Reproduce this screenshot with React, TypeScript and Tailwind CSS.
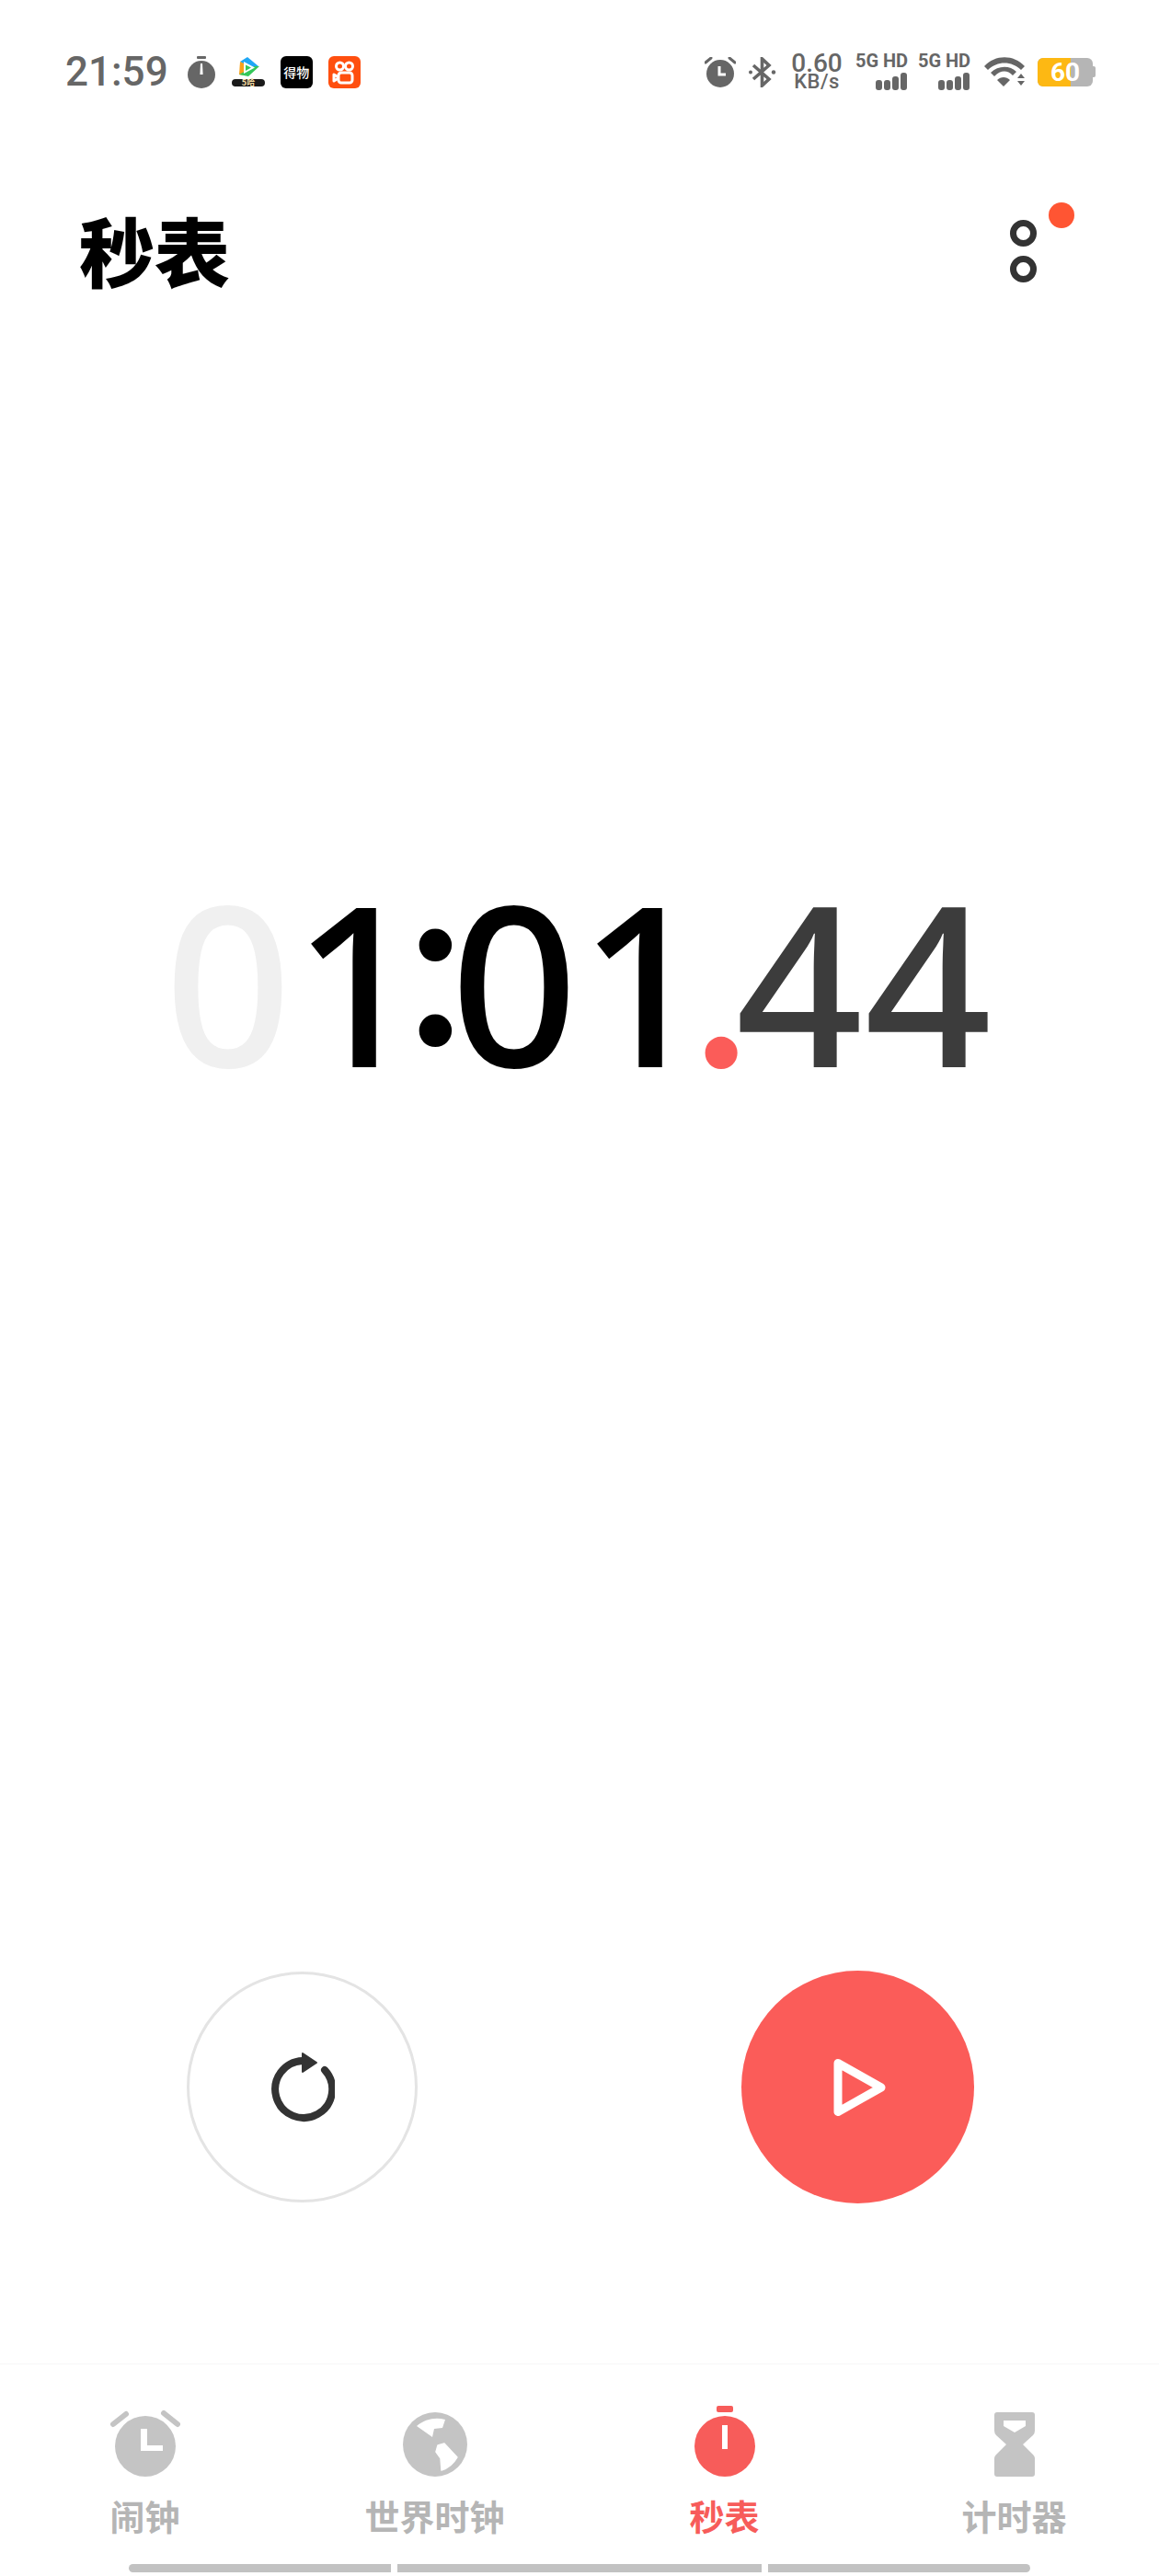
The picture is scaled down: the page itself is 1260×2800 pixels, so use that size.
const CJK = 'font-["Noto_Sans_CJK_SC",sans-serif]';

function StatusBar() {
  return (
    <div className="flex h-[60px] items-center justify-between pl-[71px] pr-[69px] mt-[48px] text-[#666666] font-['Roboto',sans-serif]">
      <div className="flex items-center">
        <span className="text-[44px] font-medium leading-none">21:59</span>
        <svg viewBox="0 0 30 35" className="ml-[21px] h-[35px] w-[30px]">
          <rect x="10" y="0" width="10" height="3" rx="1" fill="#666" />
          <circle cx="15" cy="20" r="15" fill="#666" />
          <path d="M14 8h2l.6 12h-3.2z" fill="#fff" />
        </svg>
        <svg viewBox="0 0 36 34" className="ml-[18px] h-[34px] w-[36px]">
          <path d="M9 6 L17 1 L29 11 L24 14 L12 8z" fill="#1fa7f5" />
          <path d="M9 6 L8 20 L14 21 L13 8z" fill="#f9a11b" />
          <path d="M8 20 L18 22 L30 11 L24 11z" fill="#34c759" />
          <path d="M13 6 L25 12.500 L13 19z" fill="#fff" />
          <path d="M15 9.500 L21 12.500 L15 16z" fill="#34c759" />
          <rect x="0" y="25" width="36" height="8" rx="4" fill="#1a1a1a" />
          <text x="18" y="32" textAnchor="middle" fontSize="9" fontWeight="700" fill="#f3d9a0" fontFamily="Noto Sans CJK SC">5哈</text>
        </svg>
        <div className={`ml-[17px] flex h-[35px] w-[35px] items-center justify-center rounded-[6px] bg-black text-[14px] font-medium leading-none text-white ${CJK}`}>
          得物
        </div>
        <div className="ml-[17px] flex h-[35px] w-[35px] items-center justify-center rounded-[6px] bg-[#ff4f0f]">
          <svg viewBox="0 0 35 35" className="h-[35px] w-[35px]" fill="none" stroke="#fff" strokeWidth="3">
            <circle cx="12.500" cy="11" r="4" />
            <circle cx="22.500" cy="11" r="4" />
            <rect x="11" y="18" width="15" height="11" rx="3" />
            <path d="M11 23 L6 20 V27 L11 24" strokeLinejoin="round" />
          </svg>
        </div>
      </div>
      <div className="flex items-center">
        <svg viewBox="0 0 34 33" className="h-[33px] w-[34px]">
          <circle cx="17" cy="18" r="15" fill="#666" />
          <path d="M16 10v9h7" fill="none" stroke="#fff" strokeWidth="3" />
          <path d="M1 6 L7 1 M33 6 L27 1" stroke="#666" strokeWidth="3" strokeLinecap="round" />
        </svg>
        <svg viewBox="0 0 31 33" className="ml-[13px] h-[33px] w-[31px]" fill="none" stroke="#666" strokeWidth="3.600">
          <path d="M6 9 L23 24 L15.500 31 V2 L23 9 L6 24" />
          <circle cx="3" cy="16.500" r="2" fill="#666" stroke="none" />
          <circle cx="28" cy="16.500" r="2.200" fill="#666" stroke="none" />
        </svg>
        <div className="ml-[14px] flex w-[60px] flex-col items-center font-medium leading-none">
          <span className="text-[28px] leading-[20px]">0.60</span>
          <span className="mt-[1px] text-[22px] leading-[18px] tracking-[0.5px]">KB/s</span>
        </div>
        <Signal className="ml-[12px]" />
        <Signal className="ml-[11px]" />
        <svg viewBox="0 0 44 33" className="ml-[15px] h-[33px] w-[44px]">
          <path d="M0 10 C12 -3 32 -3 44 10 L40 14 C30 4 14 4 4 14z" fill="#666" />
          <path d="M7 17 C15 9 28 9 35 16 L31 20 C25 14 18 14 11 21z" fill="#666" />
          <path d="M14 25 C18 21 24 21 28 25 L21 32z" fill="#666" />
          <path d="M36 23 L40 18 L44 23zM36 26 H44 L40 31z" fill="#666" />
        </svg>
        <div className="relative ml-[14px] flex h-[31px] w-[60px] items-center justify-center rounded-[6px] bg-[#b5b5b5] text-[28px] font-bold leading-[31px] text-white">
          <div className="absolute inset-y-0 left-0 w-[36px] rounded-l-[6px] bg-[#fdb813]" />
          <span className="relative">60</span>
        </div>
        <div className="h-[12px] w-[3px] rounded-r-[2px] bg-[#b5b5b5]" />
      </div>
    </div>
  );
}

function Signal({ className }: { className: string }) {
  return (
    <div className={`flex w-[57px] flex-col items-end gap-[4px] ${className}`}>
      <span className="self-center whitespace-nowrap text-[20px] font-bold leading-[17px]">5G HD</span>
      <div className="flex items-end gap-[2px] pr-[1px]">
        <span className="h-[11px] w-[7px] rounded-[3px] bg-[#666]" />
        <span className="h-[11px] w-[7px] rounded-[3px] bg-[#666]" />
        <span className="h-[15px] w-[7px] rounded-[3px] bg-[#666]" />
        <span className="h-[19px] w-[7px] rounded-[3px] bg-[#666]" />
      </div>
    </div>
  );
}

function Digit({ ch, className }: { ch: string; className: string }) {
  return <span className={`inline-block w-[140px] text-center ${className}`}>{ch}</span>;
}

function Clock() {
  return (
    <div className="flex h-[260px] items-baseline justify-center pr-[3px] text-[242px] font-medium leading-[260px] font-['Noto_Sans',sans-serif]">
      <Digit ch="0" className="text-[#f0f0f0]" />
      <Digit ch="1" className="text-black" />
      <span className="flex w-[31px] -translate-y-[24px] justify-center text-[255px] font-semibold text-black font-['Lato',sans-serif]">:</span>
      <Digit ch="0" className="text-black" />
      <Digit ch="1" className="text-black" />
      <span className="flex w-[30px] justify-center text-[252px] font-semibold text-[#fb5c59] font-['Lato',sans-serif]">.</span>
      <Digit ch="4" className="text-[#3c3c3c]" />
      <Digit ch="4" className="text-[#3c3c3c]" />
    </div>
  );
}

function Controls() {
  return (
    <div className="flex items-center justify-between pl-[203px] pr-[201px]">
      <button className="flex h-[251px] w-[251px] items-center justify-center rounded-full border-[3px] border-[#e4e4e4] bg-white">
        <svg viewBox="0 0 70 76" className="h-[76px] w-[70px]" fill="none">
          <path d="M59 19 A31 31 0 1 1 35 9" stroke="#333" strokeWidth="8" strokeLinecap="round" />
          <path d="M35 1 L50 11 L35 21z" fill="#333" stroke="#333" strokeWidth="2" strokeLinejoin="round" />
        </svg>
      </button>
      <button className="flex h-[253px] w-[253px] items-center justify-center rounded-full bg-[#fb5c59]">
        <svg viewBox="0 0 58 64" className="ml-[5px] h-[64px] w-[58px]" fill="none">
          <path d="M5 5.500 L52 32 L5 58.500z" stroke="#fff" strokeWidth="9" strokeLinejoin="round" />
        </svg>
      </button>
    </div>
  );
}

function NavItem({ label, active, children }: { label: string; active?: boolean; children: React.ReactNode }) {
  return (
    <div className="flex flex-col items-center">
      <div className="flex h-[80px] w-[80px] items-end justify-center">{children}</div>
      <span className={`mt-[18px] text-[38px] font-bold leading-[48px] ${CJK} ${active ? 'text-[#f75c5a]' : 'text-[#b5b5b5]'}`}>
        {label}
      </span>
    </div>
  );
}

function BottomNav() {
  return (
    <div className="border-t border-[#f7f7f7] pt-[42px]">
      <div className="grid grid-cols-4">
        <NavItem label="闹钟">
          <svg viewBox="0 0 76 72" className="h-[72px] w-[76px]">
            <circle cx="38" cy="39" r="33" fill="#c4c4c4" />
            <path d="M33 20h7v18h17v6H33z" fill="#fff" />
            <path d="M3 15 L17 4 M73 15 L58 3" stroke="#c4c4c4" strokeWidth="6" strokeLinecap="round" />
          </svg>
        </NavItem>
        <NavItem label="世界时钟">
          <svg viewBox="0 0 70 70" className="h-[70px] w-[70px]">
            <circle cx="35" cy="35" r="35" fill="#c4c4c4" />
            <path d="M15 15 C24 7 36 5 46 8 L43 17 L34 18 L32 27z" fill="#fff" />
            <path d="M38 36 L45 34 L59 49 C55 56 49 61 42 63 L41 50 L36 43z" fill="#fff" stroke="#fff" strokeLinejoin="round" strokeWidth="1.500" />
          </svg>
        </NavItem>
        <NavItem label="秒表" active>
          <svg viewBox="0 0 66 77" className="h-[77px] w-[66px]">
            <rect x="24" y="0" width="18" height="7" rx="2" fill="#f75c5a" />
            <circle cx="33" cy="44" r="33" fill="#f75c5a" />
            <rect x="30" y="21" width="6" height="26" fill="#fff" />
          </svg>
        </NavItem>
        <NavItem label="计时器">
          <svg viewBox="0 0 44 70" className="h-[70px] w-[44px]">
            <path d="M3 0 H41 A3 3 0 0 1 44 3 V20 Q44 23 42 25 L31 35 L42 46 Q44 48 44 50 V67 A3 3 0 0 1 41 70 H3 A3 3 0 0 1 0 67 V50 Q0 48 2 46 L13 35 L2 25 Q0 23 0 20 V3 A3 3 0 0 1 3 0z" fill="#c4c4c4" />
            <path d="M10 9 H34 V15 L22 22 L10 15z" fill="#fff" />
          </svg>
        </NavItem>
      </div>
      <div className="mt-[29px] flex justify-center gap-[7px] pb-[4px]">
        <span className="h-[9px] w-[285px] rounded-l-full bg-[#c2c2c2]" />
        <span className="h-[9px] w-[396px] bg-[#c2c2c2]" />
        <span className="h-[9px] w-[285px] rounded-r-full bg-[#c2c2c2]" />
      </div>
    </div>
  );
}

export default function App() {
  return (
    <div className="flex h-[2800px] w-[1260px] flex-col overflow-hidden bg-white">
      <StatusBar />
      <div className="mt-[108px] flex items-start justify-between pl-[86px] pr-[92px]">
        <h1 className={`text-[82px] font-black leading-[110px] text-black ${CJK}`}>秒表</h1>
        <div className="relative mt-[4px] flex h-[87px] w-[70px] flex-col items-start gap-[10px] pt-[19px]">
          <span className="h-[29px] w-[29px] shrink-0 rounded-full border-[7px] border-[#333]" />
          <span className="h-[29px] w-[29px] shrink-0 rounded-full border-[7px] border-[#333]" />
          <span className="absolute right-0 top-0 h-[28px] w-[28px] rounded-full bg-[#ff5533]" />
        </div>
      </div>
      <div className="mt-[605px]">
        <Clock />
      </div>
      <div className="mt-[951px]">
        <Controls />
      </div>
      <div className="mt-auto">
        <BottomNav />
      </div>
    </div>
  );
}
